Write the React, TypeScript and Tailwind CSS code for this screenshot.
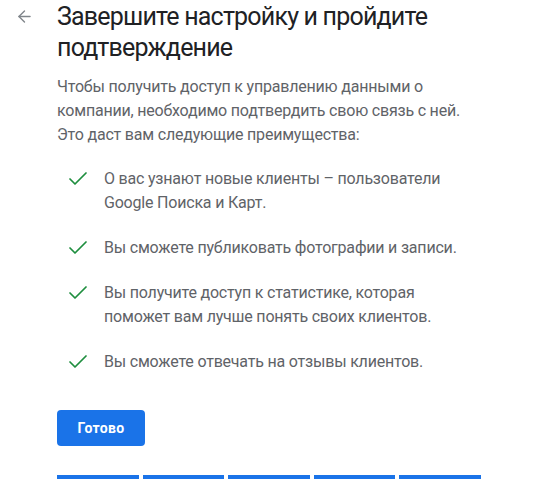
import { ArrowLeft, Check } from "lucide-react";

const benefits = [
    "О вас узнают новые клиенты – пользователи Google Поиска и Карт.",
    "Вы сможете публиковать фотографии и записи.",
    "Вы получите доступ к статистике, которая поможет вам лучше понять своих клиентов.",
    "Вы сможете отвечать на отзывы клиентов.",
];

export default function App() {
    return (
        <div className="w-[533px] h-[500px] bg-white font-['Roboto',sans-serif] overflow-hidden">
            <div className="flex">
                {/* Back arrow */}
                <div className="w-[57px] shrink-0 pl-[15px] pt-[7px]">
                    <ArrowLeft className="w-[19px] h-[19px] text-[#80868b]" strokeWidth={1.75} />
                </div>

                <div className="w-[440px]">
                    <h1 className="text-[25px] leading-[31px] text-[#202124] font-normal tracking-[-0.8px] pt-[1px]">
                        Завершите настройку и пройдите
                        <br />
                        подтверждение
                    </h1>

                    <p className="mt-[12px] w-[420px] text-[16px] leading-[24px] tracking-[-0.2px] text-[#5f6368]">
                        Чтобы получить доступ к управлению данными о компании, необходимо подтвердить свою связь с ней. Это даст вам следующие преимущества:
                    </p>

                    <ul className="mt-[20px] flex flex-col gap-[21px]">
                        {benefits.map((text, idx) => (
                            <li key={idx} className="flex items-start pl-[9px] gap-[14px]">
                                <Check className="w-[24px] h-[24px] shrink-0 text-[#1e8e3e]" strokeWidth={1.75} />
                                <span className="text-[16px] leading-[24px] tracking-[-0.2px] text-[#5f6368] w-[368px]">{text}</span>
                            </li>
                        ))}
                    </ul>

                    <button className="mt-[36px] h-[36px] w-[88px] rounded-[4px] bg-[#1a73e8] text-white text-[14px] font-bold tracking-[0.3px]">
                        Готово
                    </button>

                    {/* Progress */}
                    <div className="mt-[29px] w-[424px] grid grid-cols-5 gap-[4px]">
                        <div className="h-[4px] bg-[#1a73e8]" />
                        <div className="h-[4px] bg-[#1a73e8]" />
                        <div className="h-[4px] bg-[#1a73e8]" />
                        <div className="h-[4px] bg-[#1a73e8]" />
                        <div className="h-[4px] bg-[#1a73e8]" />
                    </div>
                </div>
            </div>
        </div>
    );
}
